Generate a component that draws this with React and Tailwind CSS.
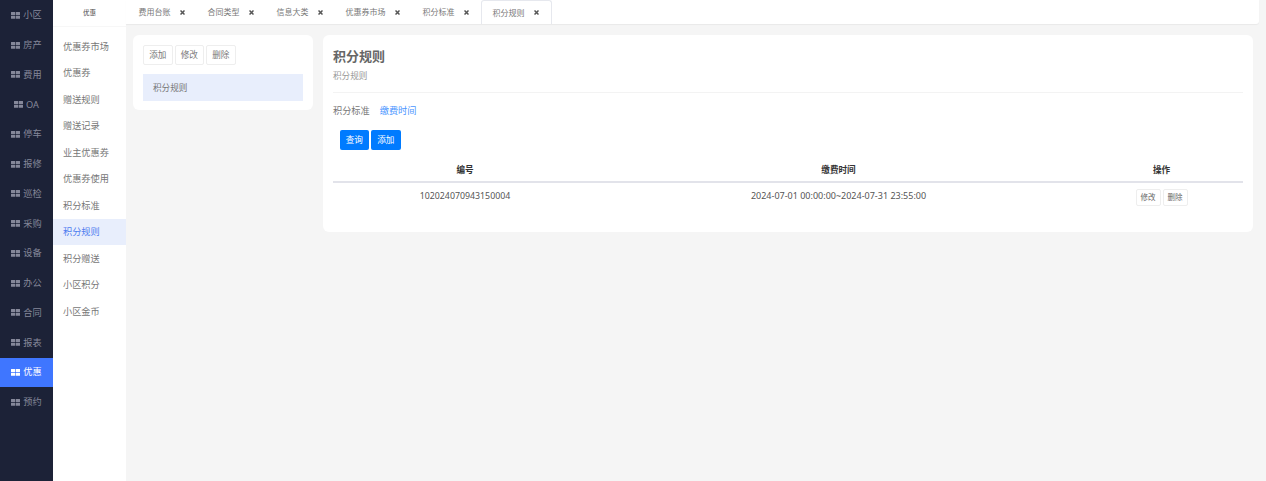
import React from "react";

const mainMenu = ["小区", "房产", "费用", "OA", "停车", "报修", "巡检", "采购", "设备", "办公", "合同", "报表", "优惠", "预约"];
const subMenu = ["优惠券市场", "优惠券", "赠送规则", "赠送记录", "业主优惠券", "优惠券使用", "积分标准", "积分规则", "积分赠送", "小区积分", "小区金币"];
const tabs = ["费用台账", "合同类型", "信息大类", "优惠券市场", "积分标准", "积分规则"];

function GridIcon() {
  return (
    <svg width="9" height="7" viewBox="0 0 9 7" fill="currentColor" className="shrink-0">
      <rect x="0" y="0" width="4.2" height="3.1" rx="0.3" />
      <rect x="4.8" y="0" width="4.2" height="3.1" rx="0.3" />
      <rect x="0" y="3.7" width="4.2" height="3.1" rx="0.3" />
      <rect x="4.8" y="3.7" width="4.2" height="3.1" rx="0.3" />
    </svg>
  );
}

function CloseIcon() {
  return (
    <svg width="5" height="5" viewBox="0 0 5 5" className="shrink-0 text-[#555]" stroke="currentColor" strokeWidth="1.5">
      <path d="M0.5 0.5L4.5 4.5M4.5 0.5L0.5 4.5" />
    </svg>
  );
}

function OutlineButton({ children }) {
  return (
    <button className="h-5 w-[29.5px] rounded-[2px] border border-[#eeeeee] bg-white text-[8.6px] text-[#777]">
      {children}
    </button>
  );
}

function SmallButton({ children }) {
  return (
    <button className="h-[17px] w-[25px] rounded-[2px] border border-[#eeeeee] bg-white text-[7.5px] text-[#666]">
      {children}
    </button>
  );
}

function BlueButton({ children }) {
  return (
    <button className="h-5 w-[29.5px] rounded-[2px] bg-[#007bff] text-[8.6px] text-white">{children}</button>
  );
}

export default function App() {
  return (
    <div className="flex h-[481px] overflow-hidden bg-[#f5f5f5] font-['Noto_Sans','Noto_Sans_CJK_SC',sans-serif]">
      <aside className="flex w-[53px] shrink-0 flex-col bg-[#1c2237] pt-[0.5px]">
        {mainMenu.map((m) => (
          <div
            key={m}
            className={`flex h-[29.75px] shrink-0 items-center justify-center gap-[3px] text-[9.2px] ${
              m === "优惠" ? "bg-[#3f76ff] text-white" : "text-[#85889a]"
            }`}
          >
            <GridIcon />
            <span>{m}</span>
          </div>
        ))}
      </aside>

      <nav className="flex w-[73px] shrink-0 flex-col bg-white">
        <div className="flex h-[27px] shrink-0 items-center justify-center border-b border-[#f7f7f7] text-[6.5px] text-[#444]">
          优惠
        </div>
        <ul className="mt-[6px]">
          {subMenu.map((s) => (
            <li
              key={s}
              className={`flex h-[26.5px] items-center pt-[1px] pl-[10px] text-[9.2px] ${
                s === "积分规则" ? "bg-[#e8eefc] text-[#4f7df0]" : "text-[#777]"
              }`}
            >
              {s}
            </li>
          ))}
        </ul>
      </nav>

      <div className="flex min-w-0 flex-1 flex-col">
        <div className="mr-[7px] flex h-[24px] shrink-0 rounded-br-[3px] bg-white pl-[1.5px] shadow-[0_1px_1px_rgba(0,0,0,0.05)]">
          {tabs.map((t) => (
            <div
              key={t}
              className={`flex h-full items-center gap-[9px] pr-[12px] pl-[11px] text-[8px] text-[#777] ${
                t === "积分规则" ? "rounded-t-[3px] border border-b-0 border-[#e6e8ee]" : ""
              }`}
            >
              <span>{t}</span>
              <CloseIcon />
            </div>
          ))}
        </div>

        <div className="flex items-start gap-[10px] pt-[11px] pl-[7px] pr-[13px]">
          <section className="w-[180px] shrink-0 rounded-[6px] bg-white p-[10px] pb-[9px]">
            <div className="flex gap-[2px]">
              <OutlineButton>添加</OutlineButton>
              <OutlineButton>修改</OutlineButton>
              <OutlineButton>删除</OutlineButton>
            </div>
            <div className="mt-[9px] flex h-[27px] items-center bg-[#e8eefc] pt-[2px] pl-[10px] text-[8.6px] text-[#777]">
              积分规则
            </div>
          </section>

          <section className="h-[197px] min-w-0 flex-1 rounded-[6px] bg-white px-[10px]">
            <h1 className="mt-[11px] text-[13px] leading-[20px] font-bold text-[#666]">积分规则</h1>
            <p className="mt-[4px] text-[8.6px] leading-[12px] text-[#999]">积分规则</p>
            <hr className="mt-[10px] border-[#f3f3f3]" />
            <div className="mt-[11px] flex h-[13px] items-center gap-[10px] text-[9.2px]">
              <span className="text-[#777]">积分标准</span>
              <span className="text-[#4a96ff]">缴费时间</span>
            </div>
            <div className="mt-[13px] flex gap-[2px] pl-[6.5px]">
              <BlueButton>查询</BlueButton>
              <BlueButton>添加</BlueButton>
            </div>
            <table className="w-[910px] table-fixed text-center text-[8.6px]">
              <thead>
                <tr className="h-[32px] border-b-[2px] border-[#e2e3ea] text-[#333]">
                  <th className="w-[264px] pt-[10px] font-bold">编号</th>
                  <th className="w-[483px] pt-[10px] font-bold">缴费时间</th>
                  <th className="w-[163px] pt-[10px] font-bold">操作</th>
                </tr>
              </thead>
              <tbody>
                <tr className="h-[25px] text-[#555]">
                  <td className="pt-[4px] text-[8.8px]">102024070943150004</td>
                  <td className="pt-[2px] text-[9px]">2024-07-01 00:00:00~2024-07-31 23:55:00</td>
                  <td>
                    <div className="mt-[5px] flex justify-center gap-[2px]">
                      <SmallButton>修改</SmallButton>
                      <SmallButton>删除</SmallButton>
                    </div>
                  </td>
                </tr>
              </tbody>
            </table>
          </section>
        </div>
      </div>
    </div>
  );
}
